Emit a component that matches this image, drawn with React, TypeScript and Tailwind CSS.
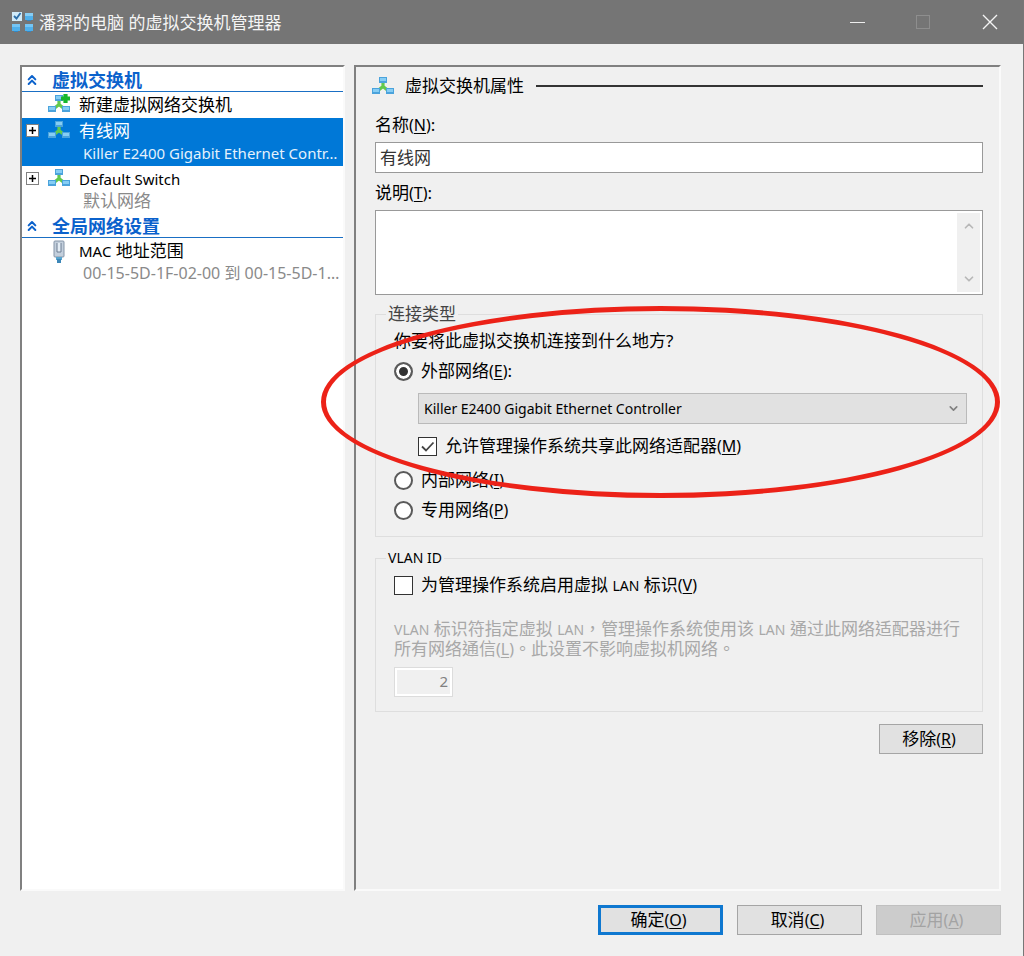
import { useState, type ReactNode } from 'react';
import { ChevronDown, ChevronUp, ChevronsUp } from 'lucide-react';

type ConnectionType = 'external' | 'internal' | 'private';

function AppIcon() {
  return (
    <svg width="24" height="22" viewBox="0 0 24 22" className="shrink-0" aria-hidden="true">
      <rect x="1" y="1" width="10" height="9" fill="#cfeaf9" />
      <path d="M3 5l2.500 2.500L9.500 2" stroke="#2c6ea8" strokeWidth="1.8" fill="none" />
      <rect x="14" y="2" width="8" height="7" fill="#4fb0ec" />
      <rect x="14" y="2" width="8" height="3" fill="#86cdf5" />
      <rect x="16" y="9" width="4" height="1" fill="#3585c0" />
      <rect x="1" y="13" width="8" height="7" fill="#4fb0ec" />
      <rect x="1" y="13" width="8" height="3" fill="#74c5f5" />
      <rect x="3" y="20" width="4" height="1" fill="#3585c0" />
      <rect x="14" y="13" width="8" height="7" fill="#4fb0ec" />
      <rect x="14" y="13" width="8" height="3" fill="#74c5f5" />
      <rect x="16" y="20" width="4" height="1" fill="#3585c0" />
    </svg>
  );
}

function SwitchIcon({ added = false }: { added?: boolean }) {
  return (
    <svg width="24" height="20" viewBox="0 0 24 20" className="shrink-0" aria-hidden="true">
      <path d="M12 6v6M12 10.500l-5 4M12 10.500l5 4" stroke="#62c94e" strokeWidth="3.2" fill="none" />
      <rect x="8" y="1" width="8" height="6" fill="#4ba3dc" />
      <rect x="9" y="2" width="6" height="3" fill="#86cdf4" />
      <rect x="1" y="12" width="8" height="6" fill="#4ba3dc" />
      <rect x="2" y="13" width="6" height="3" fill="#86cdf4" />
      <rect x="15" y="12" width="8" height="6" fill="#4ba3dc" />
      <rect x="16" y="13" width="6" height="3" fill="#86cdf4" />
      {added && <path d="M18.500 0v9M14 4.500h9" stroke="#17b72c" strokeWidth="4.2" fill="none" />}
    </svg>
  );
}

function PlugIcon() {
  return (
    <svg width="24" height="24" viewBox="0 0 24 24" className="shrink-0" aria-hidden="true">
      <rect x="7" y="1" width="10" height="16" rx="1" fill="#c3cfdc" stroke="#8595a8" />
      <path d="M10 3v9h4V3" fill="#e4edf5" stroke="#6c7d92" />
      <rect x="9" y="17" width="6" height="3" fill="#58a5cf" />
      <rect x="10" y="19" width="4" height="4" fill="#3c87b8" />
    </svg>
  );
}

function Latin({ children }: { children: ReactNode }) {
  return <span className="text-[14px]">{children}</span>;
}

// Access key shown after a label, e.g. (N)
function AccessKey({ letter }: { letter: string }) {
  return (
    <span className="text-[16px]">
      (<u className="underline-offset-2">{letter}</u>)
    </span>
  );
}

function SectionHeader({ title }: { title: string }) {
  return (
    <h2 className="flex h-[25px] items-center gap-3 border-b border-[#1a6fc4] pt-[2px] pl-[2px] text-lg leading-6 font-bold text-[#0b62cc]">
      <ChevronsUp size={16} strokeWidth={3} />
      {title}
    </h2>
  );
}

interface TreeItemProps {
  icon: ReactNode;
  title: ReactNode;
  detail?: ReactNode;
  expandable?: boolean;
  selected?: boolean;
}

function TreeItem({ icon, title, detail, expandable, selected }: TreeItemProps) {
  return (
    <li className={`flex gap-2 py-[2px] pl-1 ${selected ? 'bg-[#0078d7] text-white' : 'text-black'}`}>
      <div className="w-[13px] shrink-0 pt-1">
        {expandable && (
          <button
            aria-label="展开"
            className="flex h-[13px] w-[13px] items-center justify-center border border-[#808080] bg-white text-black"
          >
            <svg width="7" height="7" viewBox="0 0 7 7" aria-hidden="true">
              <path d="M3.500 0v7M0 3.500h7" stroke="currentColor" strokeWidth="1.500" />
            </svg>
          </button>
        )}
      </div>
      <div className="shrink-0">{icon}</div>
      <div className="min-w-0 flex-1 whitespace-nowrap">
        <div className="text-[17px] leading-[22px]">{title}</div>
        {detail && (
          <div className={`pl-1 text-[17px] leading-[21px] ${selected ? 'text-[#e4f1fc]' : 'text-[#8a8a8a]'}`}>
            {detail}
          </div>
        )}
      </div>
    </li>
  );
}

interface RadioProps {
  value: ConnectionType;
  current: ConnectionType;
  onChange: (value: ConnectionType) => void;
  children: ReactNode;
}

function Radio({ value, current, onChange, children }: RadioProps) {
  return (
    <label className="flex items-center gap-2 leading-[22px]">
      <input
        type="radio"
        name="connection"
        value={value}
        checked={current === value}
        onChange={() => onChange(value)}
        className="h-[19px] w-[19px] shrink-0 appearance-none rounded-full border-2 border-[#5a5a5a] bg-white checked:bg-[#333] checked:shadow-[inset_0_0_0_3px_white]"
      />
      <span>{children}</span>
    </label>
  );
}

interface CheckBoxProps {
  checked: boolean;
  onChange: (checked: boolean) => void;
  children: ReactNode;
}

function CheckBox({ checked, onChange, children }: CheckBoxProps) {
  return (
    <label className="flex items-center gap-2 leading-[22px]">
      <span className="relative flex shrink-0">
        <input
          type="checkbox"
          checked={checked}
          onChange={(e) => onChange(e.target.checked)}
          className="h-[19px] w-[19px] appearance-none border border-[#333] bg-white"
        />
        {checked && (
          <svg viewBox="0 0 19 19" className="pointer-events-none absolute inset-0" aria-hidden="true">
            <path d="M4 9.500l4 4L15.500 5.500" stroke="#444" strokeWidth="1.800" fill="none" />
          </svg>
        )}
      </span>
      <span>{children}</span>
    </label>
  );
}

export default function App() {
  const [name, setName] = useState('有线网');
  const [description, setDescription] = useState('');
  const [connection, setConnection] = useState<ConnectionType>('external');
  const [shared, setShared] = useState(true);
  const [vlan, setVlan] = useState(false);

  return (
    <div className="flex min-h-screen flex-col border-r border-[#777] bg-[#f0f0f0] font-['Noto_Sans','Noto_Sans_CJK_SC',sans-serif] text-[17px] text-black">
      <header className="flex h-11 items-center bg-[#757575] pl-[11px] text-white">
        <AppIcon />
        <h1 className="ml-1 flex-1 pt-[2px] text-[17px] leading-6 text-[#f4f4f4]">潘羿的电脑 的虚拟交换机管理器</h1>
        <button aria-label="最小化" className="flex h-11 w-[66px] items-center justify-center">
          <svg width="16" height="16" viewBox="0 0 16 16" aria-hidden="true">
            <path d="M0 8.500h15" stroke="#eee" />
          </svg>
        </button>
        <button aria-label="最大化" disabled className="flex h-11 w-[66px] items-center justify-center">
          <svg width="16" height="16" viewBox="0 0 16 16" aria-hidden="true">
            <rect x="0.500" y="1.500" width="13" height="13" fill="none" stroke="#8e8e8e" />
          </svg>
        </button>
        <button aria-label="关闭" className="flex h-11 w-[66px] items-center justify-center">
          <svg width="16" height="16" viewBox="0 0 16 16" aria-hidden="true">
            <path d="M1 1l14 14M15 1L1 15" stroke="#f4f4f4" strokeWidth="1.400" />
          </svg>
        </button>
      </header>

      <div className="flex flex-1 flex-col gap-[14px] pt-[21px] pr-[22px] pb-[21px] pl-5">
        <div className="flex flex-1 gap-[9px]">
          <nav className="w-[325px] shrink-0 border-2 border-t-[#808080] border-r-[#fafafa] border-b-[#fafafa] border-l-[#808080] bg-white">
            <SectionHeader title="虚拟交换机" />
            <ul>
              <TreeItem icon={<SwitchIcon added />} title="新建虚拟网络交换机" />
              <TreeItem
                expandable
                selected
                icon={<SwitchIcon />}
                title="有线网"
                detail={<span className="text-[15px]">Killer E2400 Gigabit Ethernet Contr…</span>}
              />
              <TreeItem
                expandable
                icon={<SwitchIcon />}
                title={<span className="text-[15px]">Default Switch</span>}
                detail="默认网络"
              />
            </ul>
            <SectionHeader title="全局网络设置" />
            <ul>
              <TreeItem
                icon={<PlugIcon />}
                title={
                  <>
                    <span className="text-[15px]">MAC</span> 地址范围
                  </>
                }
                detail={<span className="text-[16px]">00-15-5D-1F-02-00 到 00-15-5D-1…</span>}
              />
            </ul>
          </nav>

          <main className="min-w-0 flex-1 border-2 border-t-[#808080] border-r-[#fafafa] border-b-[#fafafa] border-l-[#808080] pt-[7px] pr-4 pl-[19px]">
            <div className="-ml-1 flex h-6 items-center">
              <SwitchIcon />
              <h2 className="ml-[10px] text-[17px] leading-6">虚拟交换机属性</h2>
              <div className="ml-3 h-[2px] flex-1 bg-[#333]" />
            </div>

            <label htmlFor="switch-name" className="mt-4 block leading-[22px]">
              名称
              <AccessKey letter="N" />:
            </label>
            <input
              id="switch-name"
              value={name}
              onChange={(e) => setName(e.target.value)}
              className="mt-[6px] block h-[31px] w-full border border-[#999] bg-white px-1 pb-[2px] text-[17px] text-[#333]"
            />

            <label htmlFor="switch-notes" className="mt-[9px] block leading-[22px]">
              说明
              <AccessKey letter="T" />:
            </label>
            <div className="mt-[6px] flex h-[85px] border border-[#999] bg-white p-[2px]">
              <textarea
                id="switch-notes"
                value={description}
                onChange={(e) => setDescription(e.target.value)}
                className="min-w-0 flex-1 resize-none px-1"
              />
              <div className="flex w-[23px] flex-col justify-between bg-[#f0f0f0] text-[#b8b8b8]">
                <button aria-label="向上滚动" className="flex h-[26px] items-center justify-center">
                  <ChevronUp size={14} strokeWidth={3} />
                </button>
                <button aria-label="向下滚动" className="flex h-[26px] items-center justify-center">
                  <ChevronDown size={14} strokeWidth={3} />
                </button>
              </div>
            </div>

            <fieldset className="relative mt-[9px] border border-[#dedede] px-[18px] pb-[15px]">
              <legend className="-ml-2 px-[2px] leading-5 text-[#444]">连接类型</legend>
              <p className="pt-[6px] leading-[22px]">你要将此虚拟交换机连接到什么地方?</p>
              <div className="mt-2">
                <Radio value="external" current={connection} onChange={setConnection}>
                  外部网络
                  <AccessKey letter="E" />:
                </Radio>
              </div>
              <div className="mt-[11px] -mr-[3px] ml-6">
                <div className="relative">
                  <select
                    aria-label="外部网络适配器"
                    className="block h-[31px] w-full appearance-none border border-[#bababa] bg-[#e1e1e1] pr-8 pl-[5px] text-[14px]"
                  >
                    <option>Killer E2400 Gigabit Ethernet Controller</option>
                  </select>
                  <ChevronDown
                    size={13}
                    strokeWidth={3}
                    className="pointer-events-none absolute top-[9px] right-[7px] text-[#808080]"
                  />
                </div>
                <div className="mt-[11px]">
                  <CheckBox checked={shared} onChange={setShared}>
                    允许管理操作系统共享此网络适配器
                    <AccessKey letter="M" />
                  </CheckBox>
                </div>
              </div>
              <div className="mt-3 flex flex-col gap-2">
                <Radio value="internal" current={connection} onChange={setConnection}>
                  内部网络
                  <AccessKey letter="I" />
                </Radio>
                <Radio value="private" current={connection} onChange={setConnection}>
                  专用网络
                  <AccessKey letter="P" />
                </Radio>
              </div>
              {/* Red marker around the external network options */}
              <div className="pointer-events-none absolute -top-[18px] -right-[18px] -left-[55px] h-[192px] rounded-[50%] border-[5px] border-[#ec2218]" />
            </fieldset>

            <fieldset className="mt-[11px] border border-[#dedede] px-[18px] pb-[14px]">
              <legend className="-ml-2 px-[2px] text-[14px] leading-5">VLAN ID</legend>
              <div className="pt-[6px]">
                <CheckBox checked={vlan} onChange={setVlan}>
                  为管理操作系统启用虚拟 <Latin>LAN</Latin> 标识
                  <AccessKey letter="V" />
                </CheckBox>
              </div>
              <label
                htmlFor="vlan-id"
                className="mt-[22px] block font-['Noto_Sans','Noto_Sans_CJK_TC',sans-serif] leading-[19px] text-[#a8a8a8]"
              >
                <Latin>VLAN</Latin> 标识符指定虚拟 <Latin>LAN</Latin>，管理操作系统使用该 <Latin>LAN</Latin>{' '}
                通过此网络适配器进行所有网络通信
                <AccessKey letter="L" />
                。此设置不影响虚拟机网络。
              </label>
              <input
                id="vlan-id"
                defaultValue="2"
                disabled
                className="mt-2 block h-[30px] w-[59px] border border-[#dcdcdc] bg-[#f0f0f0] px-1 pb-[2px] text-right text-[15px] text-[#808080] shadow-[inset_0_0_0_2px_white]"
              />
            </fieldset>

            <div className="mt-3 flex justify-end">
              <button className="h-[30px] w-[104px] border border-[#a5a5a5] bg-[#e1e1e1] pr-1 leading-[22px]">
                移除
                <AccessKey letter="R" />
              </button>
            </div>
          </main>
        </div>

        <footer className="flex justify-end gap-[14px]">
          <button className="h-[30px] w-[125px] border-[3px] border-[#0f78d0] bg-[#e1e1e1] pr-1 leading-[22px]">
            确定
            <AccessKey letter="O" />
          </button>
          <button className="h-[30px] w-[125px] border border-[#a5a5a5] bg-[#e1e1e1] pr-1 leading-[22px]">
            取消
            <AccessKey letter="C" />
          </button>
          <button
            disabled
            className="h-[30px] w-[125px] border border-[#c0c0c0] bg-[#cccccc] pr-1 leading-[22px] text-[#a3a3a3]"
          >
            应用
            <AccessKey letter="A" />
          </button>
        </footer>
      </div>
    </div>
  );
}
